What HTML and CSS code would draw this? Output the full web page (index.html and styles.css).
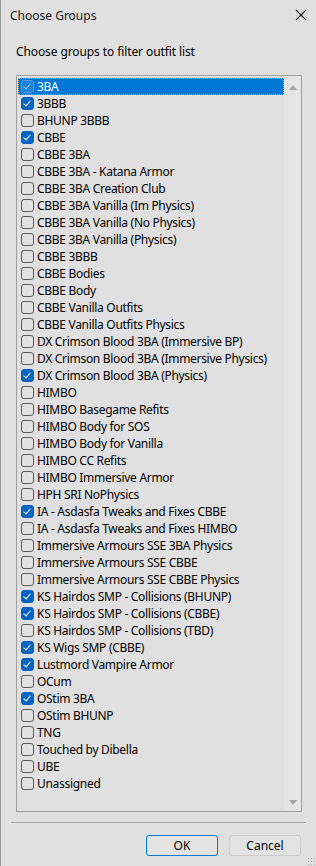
FILE: index.html
```html
<!DOCTYPE html>
<html lang="en">
<head>
    <meta charset="UTF-8">
    <title>Choose Groups</title>
    <link rel="stylesheet" href="styles.css">
</head>
<body>
    <div class="dialog">
        <div class="titlebar">
            <span class="title">Choose Groups</span>
            <svg class="close" width="12" height="12" viewBox="0 0 12 12">
                <path d="M1 1 L11 11 M11 1 L1 11" stroke="#1a1a1a" stroke-width="1.1" fill="none"/>
            </svg>
        </div>

        <p class="prompt">Choose groups to filter outfit list</p>

        <div class="listbox">
            <ul class="items">
                <li class="item selected checked"><span class="box"></span>3BA</li>
                <li class="item checked"><span class="box"></span>3BBB</li>
                <li class="item"><span class="box"></span>BHUNP 3BBB</li>
                <li class="item checked"><span class="box"></span>CBBE</li>
                <li class="item"><span class="box"></span>CBBE 3BA</li>
                <li class="item"><span class="box"></span>CBBE 3BA - Katana Armor</li>
                <li class="item"><span class="box"></span>CBBE 3BA Creation Club</li>
                <li class="item"><span class="box"></span>CBBE 3BA Vanilla (Im Physics)</li>
                <li class="item"><span class="box"></span>CBBE 3BA Vanilla (No Physics)</li>
                <li class="item"><span class="box"></span>CBBE 3BA Vanilla (Physics)</li>
                <li class="item"><span class="box"></span>CBBE 3BBB</li>
                <li class="item"><span class="box"></span>CBBE Bodies</li>
                <li class="item"><span class="box"></span>CBBE Body</li>
                <li class="item"><span class="box"></span>CBBE Vanilla Outfits</li>
                <li class="item"><span class="box"></span>CBBE Vanilla Outfits Physics</li>
                <li class="item"><span class="box"></span>DX Crimson Blood 3BA (Immersive BP)</li>
                <li class="item"><span class="box"></span>DX Crimson Blood 3BA (Immersive Physics)</li>
                <li class="item checked"><span class="box"></span>DX Crimson Blood 3BA (Physics)</li>
                <li class="item"><span class="box"></span>HIMBO</li>
                <li class="item"><span class="box"></span>HIMBO Basegame Refits</li>
                <li class="item"><span class="box"></span>HIMBO Body for SOS</li>
                <li class="item"><span class="box"></span>HIMBO Body for Vanilla</li>
                <li class="item"><span class="box"></span>HIMBO CC Refits</li>
                <li class="item"><span class="box"></span>HIMBO Immersive Armor</li>
                <li class="item"><span class="box"></span>HPH SRI NoPhysics</li>
                <li class="item checked"><span class="box"></span>IA - Asdasfa Tweaks and Fixes CBBE</li>
                <li class="item"><span class="box"></span>IA - Asdasfa Tweaks and Fixes HIMBO</li>
                <li class="item"><span class="box"></span>Immersive Armours SSE 3BA Physics</li>
                <li class="item"><span class="box"></span>Immersive Armours SSE CBBE</li>
                <li class="item"><span class="box"></span>Immersive Armours SSE CBBE Physics</li>
                <li class="item checked"><span class="box"></span>KS Hairdos SMP - Collisions (BHUNP)</li>
                <li class="item checked"><span class="box"></span>KS Hairdos SMP - Collisions (CBBE)</li>
                <li class="item"><span class="box"></span>KS Hairdos SMP - Collisions (TBD)</li>
                <li class="item checked"><span class="box"></span>KS Wigs SMP (CBBE)</li>
                <li class="item checked"><span class="box"></span>Lustmord Vampire Armor</li>
                <li class="item"><span class="box"></span>OCum</li>
                <li class="item checked"><span class="box"></span>OStim 3BA</li>
                <li class="item"><span class="box"></span>OStim BHUNP</li>
                <li class="item"><span class="box"></span>TNG</li>
                <li class="item"><span class="box"></span>Touched by Dibella</li>
                <li class="item"><span class="box"></span>UBE</li>
                <li class="item"><span class="box"></span>Unassigned</li>
            </ul>
            <div class="scrollbar">
                <span class="arrow up"></span>
                <span class="arrow down"></span>
            </div>
        </div>

        <div class="separator"></div>

        <div class="buttons">
            <button class="btn primary">OK</button>
            <button class="btn">Cancel</button>
        </div>
        <span class="grip"></span>
    </div>
</body>
</html>
```

FILE: styles.css
```css
html, body {
    margin: 0;
    padding: 0;
}

body {
    width: 316px;
    height: 866px;
    background-color: #e0e0e0;
    font-family: "Noto Sans", "Open Sans", sans-serif;
    font-size: 12px;
    color: #000;
    overflow: hidden;
}

.dialog {
    position: relative;
    height: 866px;
    box-sizing: border-box;
    border-left: 1px solid #9a9a9a;
    display: flex;
    flex-direction: column;
}

.titlebar {
    height: 30px;
    display: flex;
    align-items: center;
    justify-content: space-between;
    padding: 0 9px 0 9px;
}

.title {
    font-size: 12px;
    color: #1a1a1a;
}

.prompt {
    margin: 15px 0 0 15px;
    line-height: 14px;
    height: 14px;
    letter-spacing: -0.1px;
}

.listbox {
    margin: 16px 0 0 15px;
    width: 286px;
    height: 737px;
    box-sizing: border-box;
    border: 1px solid #a0a0a4;
    display: flex;
}

.items {
    list-style: none;
    margin: 0;
    padding: 2px 0 0 1px;
    flex: 1;
}

.item {
    height: 17px;
    line-height: 17px;
    display: flex;
    align-items: center;
    white-space: nowrap;
    padding-left: 3px;
    box-sizing: border-box;
    letter-spacing: -0.3px;
}

.item.selected {
    background-color: #0078d7;
    color: #fff;
    outline: 1px dotted #e8a030;
    outline-offset: -1px;
}

.box {
    width: 13px;
    height: 13px;
    box-sizing: border-box;
    border: 1px solid #5c5c5c;
    border-radius: 3px;
    margin-right: 3px;
    position: relative;
    flex-shrink: 0;
}

.item.checked .box {
    background-color: #0563c1;
    border-color: #0563c1;
}

.item.checked .box::after {
    content: "";
    position: absolute;
    left: 3px;
    top: 1px;
    width: 3px;
    height: 6px;
    border: solid #fff;
    border-width: 0 1.3px 1.3px 0;
    transform: rotate(40deg);
}

.item.selected .box {
    background-color: #1a82d8;
    border-color: #4a9ae0;
}

.item.selected .box::after {
    border-color: #8cc0ee;
}

.scrollbar {
    width: 17px;
    background-color: #e5e5e5;
    display: flex;
    flex-direction: column;
    justify-content: space-between;
    align-items: center;
    padding: 9px 0 6px 0;
}

.arrow {
    width: 0;
    height: 0;
    border-left: 4px solid transparent;
    border-right: 4px solid transparent;
}

.arrow.up {
    border-bottom: 5px solid #a6a6a6;
}

.arrow.down {
    border-top: 5px solid #a6a6a6;
}

.separator {
    margin: 10px 10px 0 10px;
    height: 1px;
    background-color: #a8a8a8;
}

.buttons {
    display: flex;
    justify-content: flex-end;
    gap: 11px;
    margin: 12px 15px 0 0;
}

.btn {
    width: 72px;
    height: 21px;
    box-sizing: border-box;
    border: 1px solid #cccccc;
    border-radius: 3px;
    background-color: #e3e3e3;
    font-family: "Noto Sans", "Open Sans", sans-serif;
    font-size: 12px;
    color: #000;
    padding: 0;
}

.btn.primary {
    border-color: #0078d7;
}

.grip {
    position: absolute;
    right: 1px;
    bottom: 1px;
    width: 8px;
    height: 8px;
    background-image: radial-gradient(circle, #b0b0b0 0.9px, transparent 1px);
    background-size: 3px 3px;
}
```
